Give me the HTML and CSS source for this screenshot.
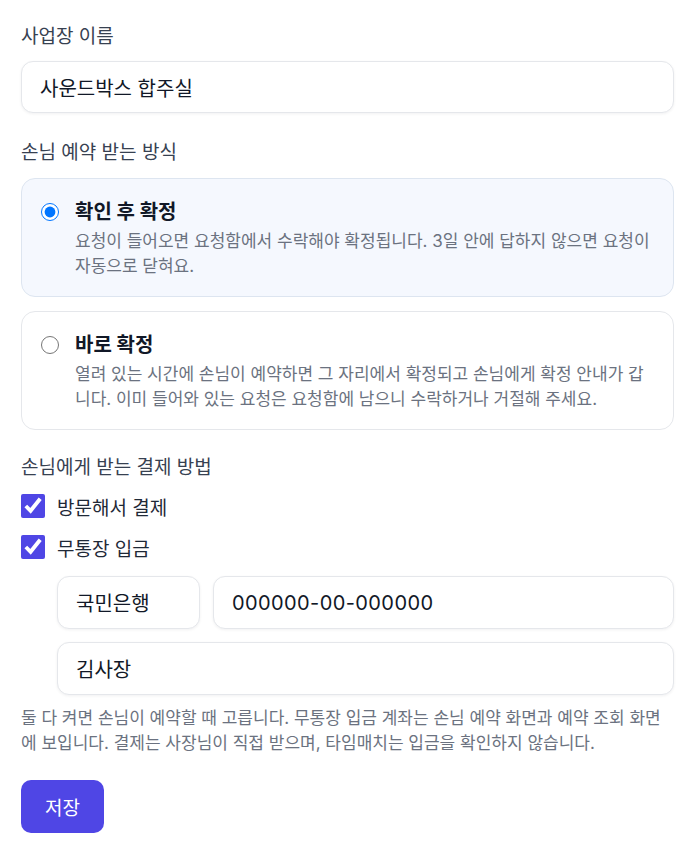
FILE: index.html
```html
<!DOCTYPE html>
<html lang="ko">
<head>
    <meta charset="UTF-8">
    <meta name="viewport" content="width=device-width, initial-scale=1.0">
    <title>사업장 설정</title>
    <link rel="stylesheet" href="styles.css">
</head>
<body>
    <form class="settings">
        <div class="field">
            <label class="field-label" for="name">사업장 이름</label>
            <input class="text-input" type="text" id="name" value="사운드박스 합주실">
        </div>

        <div class="field">
            <div class="field-label">손님 예약 받는 방식</div>
            <div class="mode-list">
                <label class="mode-card selected">
                    <input type="radio" name="mode" checked>
                    <span class="mode-text">
                        <span class="mode-title">확인 후 확정</span>
                        <span class="mode-desc">요청이 들어오면 요청함에서 수락해야 확정됩니다. 3일 안에 답하지 않으면 요청이 자동으로 닫혀요.</span>
                    </span>
                </label>
                <label class="mode-card">
                    <input type="radio" name="mode">
                    <span class="mode-text">
                        <span class="mode-title">바로 확정</span>
                        <span class="mode-desc">열려 있는 시간에 손님이 예약하면 그 자리에서 확정되고 손님에게 확정 안내가 갑니다. 이미 들어와 있는 요청은 요청함에 남으니 수락하거나 거절해 주세요.</span>
                    </span>
                </label>
            </div>
        </div>

        <div class="field payment">
            <div class="field-label">손님에게 받는 결제 방법</div>
            <label class="check-row">
                <input type="checkbox" checked>
                <span>방문해서 결제</span>
            </label>
            <label class="check-row">
                <input type="checkbox" checked>
                <span>무통장 입금</span>
            </label>
            <div class="bank-fields">
                <div class="bank-row">
                    <input class="text-input bank-name" type="text" value="국민은행">
                    <input class="text-input account" type="text" value="000000-00-000000">
                </div>
                <input class="text-input" type="text" value="김사장">
            </div>
            <p class="help">둘 다 켜면 손님이 예약할 때 고릅니다. 무통장 입금 계좌는 손님 예약 화면과 예약 조회 화면에 보입니다. 결제는 사장님이 직접 받으며, 타임매치는 입금을 확인하지 않습니다.</p>
        </div>

        <button type="button" class="save">저장</button>
    </form>
</body>
</html>
```

FILE: styles.css
```css
body {
    margin: 0;
    font-family: Inter, "Noto Sans CJK KR", sans-serif;
    color: #111827;
    background: #fff;
}
.settings {
    padding: 24px 22px 20px 21px;
}
.field {
    margin-bottom: 27px;
}
.field-label {
    display: block;
    font-size: 19px;
    line-height: 26px;
    color: #374151;
    margin-bottom: 11px;
}
.text-input {
    display: block;
    box-sizing: border-box;
    width: 100%;
    height: 52px;
    padding: 0 18px;
    font-family: inherit;
    font-size: 20px;
    color: #111827;
    background: #fff;
    border: 1px solid #e5e7eb;
    border-radius: 12px;
    box-shadow: 0 1px 3px rgba(15, 23, 42, 0.06);
    outline: none;
}
.text-input.account {
    letter-spacing: 0.4px;
}
.mode-list {
    display: flex;
    flex-direction: column;
    gap: 14px;
    margin-top: 12px;
}
.mode-card {
    display: flex;
    align-items: flex-start;
    gap: 16px;
    padding: 20px 20px 17px 19px;
    border: 1px solid #e5e7eb;
    border-radius: 14px;
    background: #fff;
    cursor: pointer;
}
.mode-card.selected {
    background: #f5f8fe;
    border-color: #dde5f0;
}
.mode-card input {
    width: 18px;
    height: 18px;
    margin: 4px 0 0 0;
    flex-shrink: 0;
}
.mode-text {
    display: flex;
    flex-direction: column;
    gap: 4px;
}
.mode-title {
    font-size: 20px;
    line-height: 26px;
    font-weight: 700;
    color: #111827;
}
.mode-desc {
    font-size: 17px;
    line-height: 25px;
    color: #6b7280;
}
.payment {
    margin-top: -2px;
}
.check-row {
    display: flex;
    align-items: center;
    gap: 12px;
    height: 28px;
    margin-top: 13px;
    font-size: 19px;
    color: #1f2937;
    cursor: pointer;
}
.field-label + .check-row {
    margin-top: 11px;
}
.check-row input {
    width: 24px;
    height: 24px;
    margin: 0;
    accent-color: #4f46e5;
}
.bank-fields {
    display: flex;
    flex-direction: column;
    gap: 13px;
    margin: 15px 0 0 36px;
}
.bank-fields .text-input {
    height: 53px;
}
.bank-row {
    display: flex;
    gap: 13px;
}
.bank-row .bank-name {
    width: 143px;
    flex-shrink: 0;
}
.help {
    margin: 11px 0 0;
    font-size: 17px;
    line-height: 25px;
    color: #6b7280;
}
.payment.field {
    margin-bottom: 24px;
}
.save {
    height: 53px;
    padding: 0 24px;
    font-family: inherit;
    font-size: 19px;
    color: #fff;
    background: #4f46e5;
    border: none;
    border-radius: 10px;
    cursor: pointer;
}
.save:hover {
    background: #4338ca;
}
```
